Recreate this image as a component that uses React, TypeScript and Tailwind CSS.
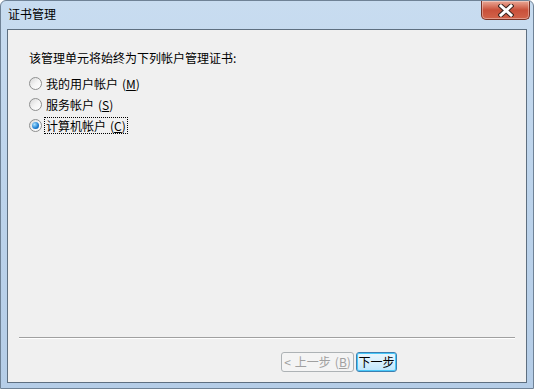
import React from "react";

const font = { fontFamily: '"Noto Sans CJK SC", "Liberation Sans", sans-serif' };

function Radio({ checked }: { checked?: boolean }) {
  return (
    <span className="relative flex h-[13px] w-[13px] shrink-0 items-center justify-center rounded-full border border-[#8e8f8f] bg-gradient-to-br from-[#d8d8d8] via-[#f4f4f4] to-white">
      {checked && (
        <span className="h-[7px] w-[7px] rounded-full bg-[radial-gradient(circle_at_35%_35%,#a9e2ff,#1c7dd1_60%,#0a4f8f)]" />
      )}
    </span>
  );
}

function Option({ label, hot, checked, focused }: { label: string; hot: string; checked?: boolean; focused?: boolean }) {
  return (
    <div className="flex h-[21px] items-center gap-[3px]">
      <Radio checked={checked} />
      <span
        className={
          "flex h-[15px] items-center px-px text-[12px] leading-none text-black " +
          (focused ? "outline outline-1 outline-dotted outline-black" : "")
        }
      >
        {label}
        <span className="ml-[4px]">(</span>
        <span className="underline underline-offset-1">{hot}</span>
        <span>)</span>
      </span>
    </div>
  );
}

export default function App() {
  return (
    <div
      className="flex h-[389px] w-[534px] flex-col overflow-hidden rounded-t-[6px] border border-[#6f8296] bg-gradient-to-b from-[#c8dcf0] via-[#bcd3eb] to-[#b5cde7]"
      style={font}
    >
      <div className="flex h-[28px] shrink-0 items-start justify-between">
        <span className="mt-[6px] ml-[7px] text-[12px] leading-[14px] text-black">证书管理</span>
        <div className="mr-[3px] flex h-[19px] w-[49px] items-center justify-center rounded-b-[5px] border border-t-0 border-[#7a3326] bg-gradient-to-b from-[#e9a796] via-[#c9503a] to-[#d2634a] shadow-[inset_0_0_0_1px_rgba(255,255,255,0.35)]">
          <svg width="16" height="13" viewBox="0 0 16 13">
            <path d="M3 2 L13 11 M13 2 L3 11" fill="none" stroke="#3c2620" strokeWidth="5" strokeLinecap="square" />
            <path d="M3 2 L13 11 M13 2 L3 11" fill="none" stroke="#ffffff" strokeWidth="3" strokeLinecap="square" />
          </svg>
        </div>
      </div>
      <div className="mx-[6px] mb-[5px] flex flex-1 flex-col border border-[#5e6f80] bg-[#f0f0f0]">
        <div className="flex flex-1 flex-col pl-[21px] pt-[21px]">
          <p className="h-[14px] text-[12px] leading-[14px] text-black">该管理单元将始终为下列帐户管理证书:</p>
          <div className="mt-[8px] flex flex-col">
            <Option label="我的用户帐户" hot="M" />
            <Option label="服务帐户" hot="S" />
            <Option label="计算机帐户" hot="C" checked focused />
          </div>
        </div>
        <div className="mx-[11px] h-[2px] border-t border-b border-t-[#a0a0a0] border-b-white" />
        <div className="flex h-[43px] items-start pl-[273px] pt-[13px]">
          <div className="flex h-[20px] w-[73px] items-center justify-center gap-[4px] rounded-[3px] border border-[#adb2b5] bg-[#f4f4f4] text-[12px] text-[#a0a0a0]">
            <span>&lt;</span>
            <span>上一步</span>
            <span>
              (<span className="underline">B</span>)
            </span>
          </div>
          <div className="ml-[2px] flex h-[20px] w-[41px] items-center justify-center rounded-[3px] border border-[#3c7fb1] bg-gradient-to-b from-[#eaf6fd] via-[#d9f0fc] to-[#bee6fd] text-[12px] text-black shadow-[inset_0_0_0_1px_#48c8f9]">
            下一步
          </div>
        </div>
      </div>
    </div>
  );
}
